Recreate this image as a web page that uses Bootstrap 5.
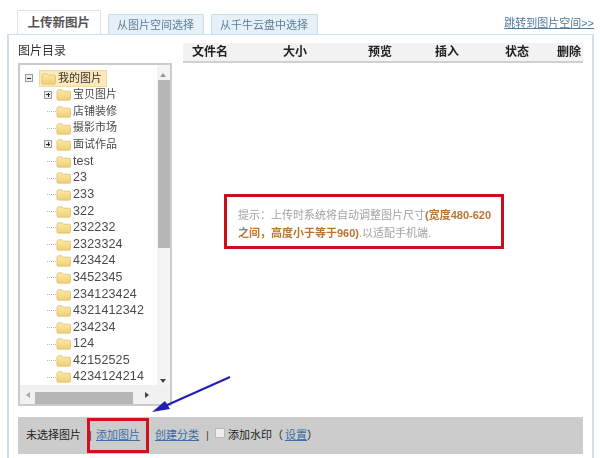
<!DOCTYPE html>
<html lang="zh-CN">
<head>
<meta charset="utf-8">
<title>上传新图片</title>
<link href="https://cdn.jsdelivr.net/npm/bootstrap@5.3.0/dist/css/bootstrap.min.css" rel="stylesheet">
<style>
html,body{width:600px;height:458px;overflow:hidden;background:#fff}
body{position:relative;font-family:"Liberation Sans","Noto Sans CJK SC",sans-serif;font-size:11px;color:#333;line-height:1.2}
.shell{height:458px;padding:11px 6px 0 7px;filter:blur(.45px)}
.tabbar{height:23px;border-bottom:0;padding-left:10px;gap:7px;position:relative;flex-wrap:nowrap}
.tabbar .nav-link{border:1px solid #c6dcea;border-bottom:0;border-radius:2px 2px 0 0;margin:0;background:#e6f0f8;color:#5b7f99;font-size:11px;height:20px;padding:3px 8.5px 0;line-height:15px;white-space:nowrap}
.tabbar .nav-link.active{background:#fff;color:#555;font-weight:700;font-size:12.5px;height:24px;padding:5px 9.5px 0;margin-top:-1px;position:relative;z-index:2}
.jump{font-size:11px;color:#4c7b9e;text-decoration:underline;position:absolute;right:0;top:6px}
.pane{height:424px;border:solid #cfe0ea;border-width:1px 2px 0 2px;padding:8px 9px 0 9px;display:flex;flex-direction:column}
.upper{display:flex;gap:11px;height:363px}
.leftcol{width:154px;flex:none}
.treetitle{font-size:12px;color:#333;height:20px;line-height:17px}
.treebox{height:343px;border:2px solid #cbcbcb;position:relative;overflow:hidden;background:#fff}
.treelist{padding:5px 0 0 0;margin:0;list-style:none;height:321px;overflow:hidden}
.node{height:16.6px;display:flex;align-items:center;color:#4a4a4a;font-size:11.5px;white-space:nowrap;padding-left:36px;position:relative}
.node.root{padding-left:19px;color:#333}
.node .nm{font-size:12.5px;letter-spacing:.15px;margin-left:2px}
.node.cn .nm{font-size:11px;letter-spacing:0}
.folder{width:15px;height:13px;flex:none}
.rootbg{display:flex;align-items:center;background:#fde9b9;border:1px solid #f3d9a0;height:17px;padding:0 4px 0 1px}
.box{width:8px;height:8px;border:1px solid #9a9a9a;background:#eee;position:absolute;top:4px;left:24px;display:flex;align-items:center;justify-content:center}
.box.rootbox{left:5px}
.box::before{content:"";width:4px;height:1px;background:#222;position:absolute}
.box.plus::after{content:"";width:1px;height:4px;background:#222;position:absolute}
.dash{position:absolute;left:27px;top:8px;width:9px;border-top:1px dotted #bbb}
.vbar{position:absolute;right:0;top:0;width:13px;height:320px;background:#f4f4f4}
.vthumb{position:absolute;left:1px;top:15px;width:12px;height:168px;background:#b6b6b6}
.hbar{position:absolute;left:0;right:0;bottom:0;height:19px;background:#f1f1f1}
.hthumb{position:absolute;left:15px;bottom:0;width:98px;height:12px;background:#b6b6b6}
.tri{position:absolute;width:0;height:0;border:solid transparent}
.tri.up{right:4px;top:8px;border-width:0 3.5px 4px;border-bottom-color:#999}
.tri.down{right:4px;top:314px;border-width:4px 3.5px 0;border-top-color:#444}
.tri.left{left:6px;bottom:6px;border-width:3.5px 4px 3.5px 0;border-right-color:#aaa}
.tri.right{right:21px;bottom:6px;border-width:3.5px 0 3.5px 4px;border-left-color:#444}
.rightcol{flex:1;display:flex;flex-direction:column;min-width:0}
.headrow{height:20px;background:#f2f2f2;border-bottom:2px solid #d0d0d0;display:grid;grid-template-columns:91px 85px 67px 70px 52px auto;padding-left:9px;font-weight:700;font-size:12px;color:#222;line-height:18px}
.notearea{flex:1;display:flex;padding:131px 0 0 41px}
.notebox{width:280px;height:55px;border:3px solid #c8101a;padding:9px 0 0 11px;color:#a2a2a2;font-size:11px;line-height:18px;align-self:flex-start}
.notebox b{color:#b9752f}
.footbar{height:37px;margin-top:11px;background:#ccc;display:flex;align-items:center;padding-left:8px;color:#222;font-size:11px;position:relative}
.footbar a{color:#3a6ea5}
.sep{color:#444;width:3px;text-align:center}
.g1{margin-left:8px;margin-right:4px}
.g2{margin-left:6.500px;margin-right:5.500px}
.g3{margin-left:7px;margin-right:6px}
.sq{width:10px;height:10px;background:#eee;border:1px solid #bbb;display:inline-block;margin:-5px 3px 0 0}
.setlink{margin-left:2px}
.redframe{position:absolute;left:69px;top:1px;width:62px;height:35px;border:3px solid #d2101a}
.arrow{position:absolute;left:0;top:0;pointer-events:none}
</style>
</head>
<body>
<svg width="0" height="0" class="d-block" aria-hidden="true"><defs>
<linearGradient id="fg" x1="0" y1="0" x2="0" y2="1"><stop offset="0" stop-color="#fbeaa8"/><stop offset="1" stop-color="#f1cf72"/></linearGradient>
<symbol id="fd" viewBox="0 0 16 13"><path d="M1 3.500Q1 1.500 3 1.500H6.500L8 3H14Q15.500 3 15.500 4.500V11Q15.500 12.500 14 12.500H2.500Q1 12.500 1 11Z" fill="url(#fg)" stroke="#dcbb68" stroke-width=".8"/></symbol>
</defs></svg>
<div class="shell">
  <div class="position-relative">
    <ul class="nav nav-tabs tabbar">
      <li class="nav-item d-flex align-items-end"><a class="nav-link active" href="#">上传新图片</a></li>
      <li class="nav-item d-flex align-items-end"><a class="nav-link" href="#">从图片空间选择</a></li>
      <li class="nav-item d-flex align-items-end"><a class="nav-link" href="#">从千牛云盘中选择</a></li>
    </ul>
    <a class="jump" href="#">跳转到图片空间&gt;&gt;</a>
  </div>
  <div class="pane">
    <div class="upper">
      <div class="leftcol">
        <div class="treetitle">图片目录</div>
        <div class="treebox">
          <ul class="treelist">
            <li class="node root cn"><span class="box rootbox"></span><span class="rootbg"><svg class="folder"><use href="#fd"/></svg><span class="nm">我的图片</span></span></li>
            <li class="node cn"><span class="box plus"></span><svg class="folder"><use href="#fd"/></svg><span class="nm">宝贝图片</span></li>
            <li class="node cn"><span class="dash"></span><svg class="folder"><use href="#fd"/></svg><span class="nm">店铺装修</span></li>
            <li class="node cn"><span class="dash"></span><svg class="folder"><use href="#fd"/></svg><span class="nm">摄影市场</span></li>
            <li class="node cn"><span class="box plus"></span><svg class="folder"><use href="#fd"/></svg><span class="nm">面试作品</span></li>
            <li class="node"><span class="dash"></span><svg class="folder"><use href="#fd"/></svg><span class="nm">test</span></li>
            <li class="node"><span class="dash"></span><svg class="folder"><use href="#fd"/></svg><span class="nm">23</span></li>
            <li class="node"><span class="dash"></span><svg class="folder"><use href="#fd"/></svg><span class="nm">233</span></li>
            <li class="node"><span class="dash"></span><svg class="folder"><use href="#fd"/></svg><span class="nm">322</span></li>
            <li class="node"><span class="dash"></span><svg class="folder"><use href="#fd"/></svg><span class="nm">232232</span></li>
            <li class="node"><span class="dash"></span><svg class="folder"><use href="#fd"/></svg><span class="nm">2323324</span></li>
            <li class="node"><span class="dash"></span><svg class="folder"><use href="#fd"/></svg><span class="nm">423424</span></li>
            <li class="node"><span class="dash"></span><svg class="folder"><use href="#fd"/></svg><span class="nm">3452345</span></li>
            <li class="node"><span class="dash"></span><svg class="folder"><use href="#fd"/></svg><span class="nm">234123424</span></li>
            <li class="node"><span class="dash"></span><svg class="folder"><use href="#fd"/></svg><span class="nm">4321412342</span></li>
            <li class="node"><span class="dash"></span><svg class="folder"><use href="#fd"/></svg><span class="nm">234234</span></li>
            <li class="node"><span class="dash"></span><svg class="folder"><use href="#fd"/></svg><span class="nm">124</span></li>
            <li class="node"><span class="dash"></span><svg class="folder"><use href="#fd"/></svg><span class="nm">42152525</span></li>
            <li class="node"><span class="dash"></span><svg class="folder"><use href="#fd"/></svg><span class="nm">4234124214</span></li>
            <li class="node"><span class="dash"></span><svg class="folder"><use href="#fd"/></svg><span class="nm">423423424</span></li>
          </ul>
          <div class="vbar"><div class="vthumb"></div><span class="tri up"></span><span class="tri down"></span></div>
          <div class="hbar"><div class="hthumb"></div><span class="tri left"></span><span class="tri right"></span></div>
        </div>
      </div>
      <div class="rightcol">
        <div class="headrow"><span>文件名</span><span>大小</span><span>预览</span><span>插入</span><span>状态</span><span>删除</span></div>
        <div class="notearea">
          <div class="notebox">提示：上传时系统将自动调整图片尺寸<b>(宽度480-620<br>之间，高度小于等于960)</b>.以适配手机端.</div>
        </div>
      </div>
    </div>
    <div class="footbar">
      <span>未选择图片</span>
      <span class="sep g1">|</span>
      <a href="#">添加图片</a>
      <span class="sep g2">|</span>
      <a href="#">创建分类</a>
      <span class="sep g3">|</span>
      <span class="sq"></span>
      <span>添加水印（</span>
      <a href="#" class="setlink">设置</a>
      <span>）</span>
      <span class="redframe"></span>
    </div>
  </div>
</div>
<svg class="arrow" width="600" height="458" aria-hidden="true"><path d="M230 377L165 406" stroke="#1f1fb5" stroke-width="2" fill="none"/><path d="M152 412L170 409L165 401Z" fill="#1f1fb5"/></svg>
</body>
</html>
